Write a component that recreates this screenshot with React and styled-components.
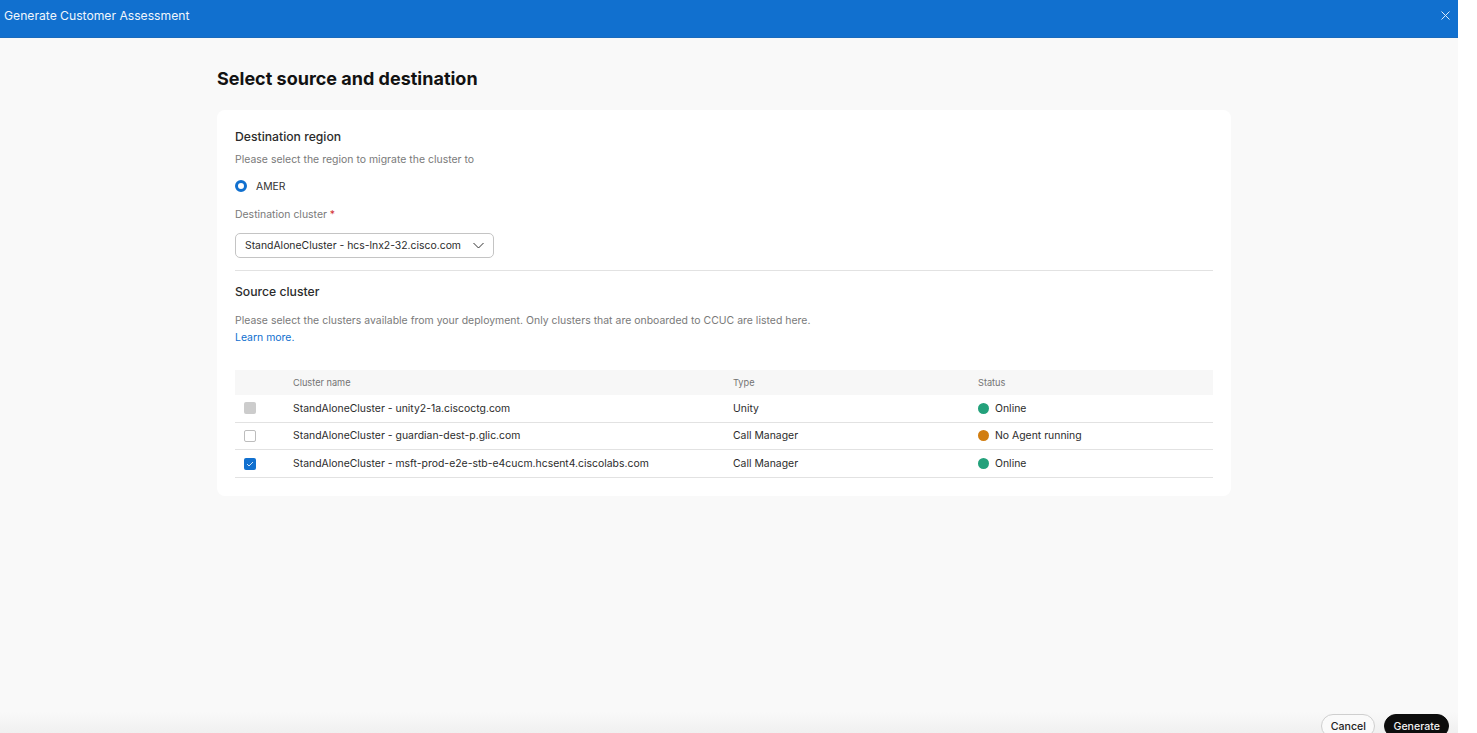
import React from 'react';
import styled, {createGlobalStyle} from 'styled-components'

const GlobalStyle = createGlobalStyle`
  html, body {
    margin: 0;
    padding: 0;
    background: #fff;
    overflow: hidden;
  }
  * {
    box-sizing: border-box;
  }
`
const Shell = styled.div`
  width: 1458px;
  height: 733px;
  display: flex;
  flex-direction: column;
  overflow: hidden;
  background: #f9f9f9;
  font-family: Inter, "Liberation Sans", sans-serif;
  color: #2b2b2b;
`
const TopBar = styled.div`
  height: 38px;
  flex-shrink: 0;
  display: flex;
  justify-content: space-between;
  padding: 8px 8px 0 4px;
  background: #1170cf;
  border-bottom: 1px solid #1a6bbd;
`
const TopTitle = styled.div`
  font-size: 12.15px;
  line-height: 15px;
  color: #f0f6fc;
`
const CloseButton = styled.div`
  width: 9px;
  height: 9px;
  margin-top: 3px;
  color: #dbe9f8;
  display: flex;
`
const Main = styled.div`
  flex: 1;
  min-height: 0;
  padding: 29px 227px 0 217px;
`
const Heading = styled.h1`
  margin: 0 0 20px;
  font-size: 18px;
  line-height: 23px;
  font-weight: 650;
  color: #121212;
`
const Card = styled.div`
  height: 386px;
  padding: 19px 18px 18px;
  background: #fff;
  border-radius: 8px;
`
const SectionTitle = styled.div`
  font-size: 12.2px;
  line-height: 16px;
  font-weight: 500;
  color: #2b2b2b;
`
const Hint = styled.div`
  margin-top: ${p => p.$top}px;
  font-size: 10.45px;
  letter-spacing: 0.015px;
  line-height: 18px;
  color: #7a7a7a;
`
const RadioRow = styled.div`
  display: flex;
  align-items: center;
  gap: 9px;
  margin-top: 8px;
  height: 18px;
  font-size: 10.4px;
  color: #333;
`
const Radio = styled.div`
  width: 12px;
  height: 12px;
  border-radius: 50%;
  border: 3.5px solid #1170cf;
  background: #fff;
`
const FieldLabel = styled.div`
  margin-top: 11px;
  font-size: 10.45px;
  line-height: 18px;
  color: #7a7a7a;
`
const Required = styled.span`
  color: #d13030;
`
const Select = styled.div`
  width: 259px;
  height: 25px;
  margin-top: 9px;
  padding: 0 9px;
  display: flex;
  align-items: center;
  justify-content: space-between;
  border: 1px solid #c4c4c4;
  border-radius: 5px;
  font-size: 10.4px;
  color: #2b2b2b;
`
const Chevron = styled.svg`
  width: 11px;
  height: 7px;
  color: #333;
`
const Divider = styled.div`
  height: 1px;
  margin: 12px 0 13px;
  background: #e2e2e2;
`
const LearnMore = styled.a`
  display: block;
  margin-top: -1px;
  font-size: 10.45px;
  line-height: 18px;
  color: #1170cf;
`
const Table = styled.div`
  margin-top: 23px;
`
const Row = styled.div`
  display: grid;
  grid-template-columns: 58px 440px 245px 1fr;
  align-items: center;
  height: ${p => (p.$head ? '25px' : '27.67px')};
  background: ${p => (p.$head ? '#f7f7f7' : '#fff')};
  border-bottom: ${p => (p.$head ? 'none' : '1px solid #e2e2e2')};
  font-size: ${p => (p.$head ? 9.2 : 10.4)}px;
  letter-spacing: ${p => (p.$head ? 0 : 0.015)}px;
  color: ${p => (p.$head ? '#737373' : '#2b2b2b')};
`
const CheckCell = styled.div`
  padding-left: 9px;
  display: flex;
`
const CheckBox = styled.div`
  width: 12px;
  height: 12px;
  display: flex;
  align-items: center;
  justify-content: center;
  border-radius: 2px;
  border: 1px solid ${p => (p.$state === 'empty' ? '#bdbdbd' : 'transparent')};
  background: ${p => ({disabled: '#cccccc', checked: '#1170cf', empty: '#fff'}[p.$state])};
`
const StatusCell = styled.div`
  display: flex;
  align-items: center;
  gap: 6px;
`
const Dot = styled.span`
  width: 11px;
  height: 11px;
  border-radius: 50%;
  background: ${p => p.$color};
`
const Footer = styled.div`
  height: 21px;
  flex-shrink: 0;
  display: flex;
  justify-content: flex-end;
  align-items: flex-start;
  gap: 9px;
  padding: 2px 9px 0 0;
  background: linear-gradient(to bottom, #f9f9f9, #f0f0f0);
`
const Button = styled.div`
  height: 24px;
  flex-shrink: 0;
  padding: 0 ${p => (p.$primary ? 8 : 8.5)}px;
  display: flex;
  align-items: center;
  border-radius: 12px;
  border: 1px solid ${p => (p.$primary ? '#0d0d0d' : '#cfcfcf')};
  background: ${p => (p.$primary ? '#0d0d0d' : '#fafafa')};
  color: ${p => (p.$primary ? '#f2f2f2' : '#222')};
  font-size: 10.6px;
  font-weight: 500;
`

const clusters = [
  {name: 'StandAloneCluster - unity2-1a.ciscoctg.com', type: 'Unity', status: 'Online', color: '#23a17b', box: 'disabled'},
  {name: 'StandAloneCluster - guardian-dest-p.glic.com', type: 'Call Manager', status: 'No Agent running', color: '#d17d10', box: 'empty'},
  {name: 'StandAloneCluster - msft-prod-e2e-stb-e4cucm.hcsent4.ciscolabs.com', type: 'Call Manager', status: 'Online', color: '#23a17b', box: 'checked'},
]

const App = () => {
  return (
    <>
      <GlobalStyle/>
      <Shell>
        <TopBar>
          <TopTitle>Generate Customer Assessment</TopTitle>
          <CloseButton>
            <svg width="9" height="9" viewBox="0 0 9 9" fill="none" stroke="currentColor" strokeWidth="1">
              <path d="M0.5 0.5L8.5 8.5M8.5 0.5L0.5 8.5"/>
            </svg>
          </CloseButton>
        </TopBar>
        <Main>
          <Heading>Select source and destination</Heading>
          <Card>
            <SectionTitle>Destination region</SectionTitle>
            <Hint $top={6}>Please select the region to migrate the cluster to</Hint>
            <RadioRow><Radio/>AMER</RadioRow>
            <FieldLabel>Destination cluster <Required>*</Required></FieldLabel>
            <Select>
              StandAloneCluster - hcs-lnx2-32.cisco.com
              <Chevron viewBox="0 0 11 7" fill="none" stroke="currentColor" strokeWidth="1">
                <path d="M0.5 1L5.5 6L10.5 1"/>
              </Chevron>
            </Select>
            <Divider/>
            <SectionTitle>Source cluster</SectionTitle>
            <Hint $top={12}>Please select the clusters available from your deployment. Only clusters that are onboarded to CCUC are listed here.</Hint>
            <LearnMore>Learn more.</LearnMore>
            <Table>
              <Row $head>
                <span/>
                <span>Cluster name</span>
                <span>Type</span>
                <span>Status</span>
              </Row>
              {clusters.map(c => (
                <Row key={c.name}>
                  <CheckCell>
                    <CheckBox $state={c.box}>
                      {c.box === 'checked' ? (
                        <svg width="8" height="6" viewBox="0 0 8 6" fill="none" stroke="#cfe3f7" strokeWidth="1">
                          <path d="M1 3L3 5L7 1"/>
                        </svg>
                      ) : null}
                    </CheckBox>
                  </CheckCell>
                  <span>{c.name}</span>
                  <span>{c.type}</span>
                  <StatusCell><Dot $color={c.color}/>{c.status}</StatusCell>
                </Row>
              ))}
            </Table>
          </Card>
        </Main>
        <Footer>
          <Button>Cancel</Button>
          <Button $primary>Generate</Button>
        </Footer>
      </Shell>
    </>
  );
};

export default App;
